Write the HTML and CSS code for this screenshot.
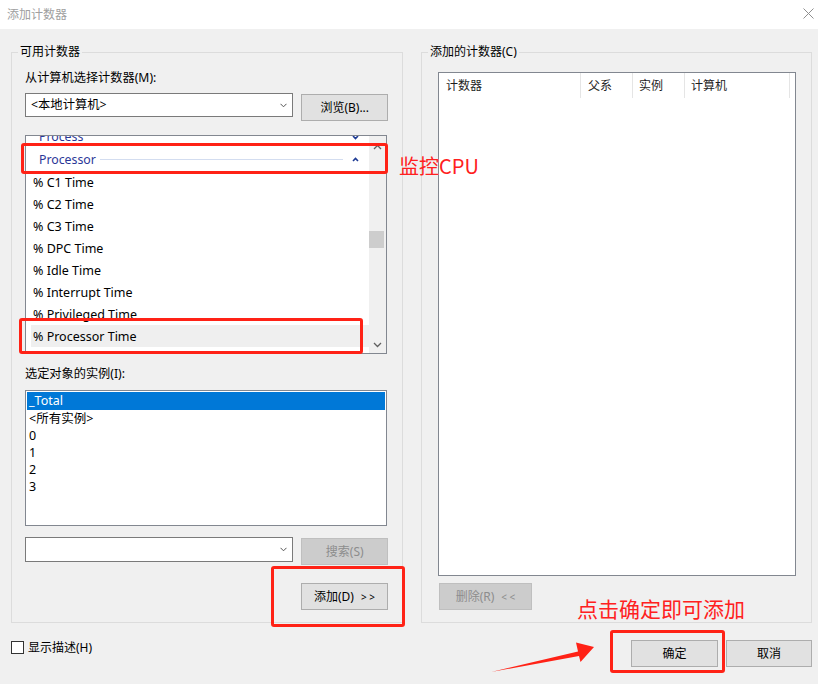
FILE: index.html
```html
<!DOCTYPE html>
<html lang="zh-CN">
<head>
<meta charset="utf-8">
<title>添加计数器</title>
<link rel="stylesheet" href="styles.css">
</head>
<body>
<div class="window">
  <div class="titlebar">
    <span class="title">添加计数器</span>
    <svg class="close" width="11" height="11" viewBox="0 0 11 11"><path d="M0.5 0.5L10.5 10.5M10.5 0.5L0.5 10.5" stroke="#8f8f8f" stroke-width="1" fill="none"/></svg>
  </div>
  <div class="client">
    <div class="groups">
      <fieldset class="group group-left">
        <legend>可用计数器</legend>
        <div class="label label-machine">从计算机选择计数器(M):</div>
        <div class="row row-machine">
          <div class="combo combo-machine">
            <span class="combo-text">&lt;本地计算机&gt;</span>
            <svg class="combo-arrow" width="7" height="5" viewBox="0 0 7 5"><path d="M0.5 0.8L3.5 3.8L6.5 0.8" stroke="#555" stroke-width="1" fill="none"/></svg>
          </div>
          <button class="btn btn-browse">浏览(B)...</button>
        </div>
        <div class="counter-list">
          <div class="rows">
            <div class="rows-inner">
              <div class="grp-row">
                <span class="grp-name">Process</span>
                <span class="grp-space"></span>
                <svg class="grp-chev" width="7" height="5" viewBox="0 0 7 5"><path d="M1 1L3.5 3.5L6 1" stroke="#1d3a94" stroke-width="1.6" fill="none"/></svg>
              </div>
              <div class="grp-row grp-open">
                <span class="grp-name">Processor</span>
                <span class="grp-line"></span>
                <svg class="grp-chev" width="7" height="5" viewBox="0 0 7 5"><path d="M1 4L3.5 1.5L6 4" stroke="#1d3a94" stroke-width="1.6" fill="none"/></svg>
              </div>
              <div class="item">% C1 Time</div>
              <div class="item">% C2 Time</div>
              <div class="item">% C3 Time</div>
              <div class="item">% DPC Time</div>
              <div class="item">% Idle Time</div>
              <div class="item">% Interrupt Time</div>
              <div class="item">% Privileged Time</div>
              <div class="item item-hot">% Processor Time</div>
            </div>
          </div>
          <div class="vscroll">
            <div class="sb-btn sb-up"><svg width="9" height="6" viewBox="0 0 9 6"><path d="M1 5L4.5 1.5L8 5" stroke="#606060" stroke-width="1.3" fill="none"/></svg></div>
            <div class="sb-track"><div class="sb-thumb"></div></div>
            <div class="sb-btn"><svg width="9" height="6" viewBox="0 0 9 6"><path d="M1 1L4.5 4.5L8 1" stroke="#606060" stroke-width="1.3" fill="none"/></svg></div>
          </div>
        </div>
        <div class="label label-inst">选定对象的实例(I):</div>
        <div class="instances">
          <div class="inst inst-sel">_Total</div>
          <div class="inst">&lt;所有实例&gt;</div>
          <div class="inst">0</div>
          <div class="inst">1</div>
          <div class="inst">2</div>
          <div class="inst">3</div>
        </div>
        <div class="row row-search">
          <div class="combo combo-search">
            <span class="combo-text"></span>
            <svg class="combo-arrow" width="7" height="5" viewBox="0 0 7 5"><path d="M0.5 0.8L3.5 3.8L6.5 0.8" stroke="#555" stroke-width="1" fill="none"/></svg>
          </div>
          <button class="btn btn-search btn-disabled">搜索(S)</button>
        </div>
        <div class="row row-add">
          <button class="btn btn-add">添加(D)<span class="arrows">&gt; &gt;</span></button>
        </div>
      </fieldset>
      <fieldset class="group group-right">
        <legend>添加的计数器(C)</legend>
        <div class="listview">
          <div class="lv-header">
            <div class="lv-col c1">计数器</div>
            <div class="lv-col c2">父系</div>
            <div class="lv-col c3">实例</div>
            <div class="lv-col c4">计算机</div>
          </div>
        </div>
        <div class="row row-remove">
          <button class="btn btn-remove btn-disabled">删除(R)<span class="arrows">&lt; &lt;</span></button>
        </div>
      </fieldset>
    </div>
    <div class="footer">
      <label class="check">
        <span class="check-box"></span>
        <span class="check-text">显示描述(H)</span>
      </label>
      <div class="footer-buttons">
        <button class="btn btn-ok">确定</button>
        <button class="btn btn-cancel">取消</button>
      </div>
    </div>
  </div>

  <div class="mark mark-processor"></div>
  <div class="mark mark-ptime"></div>
  <div class="mark mark-add"></div>
  <div class="mark mark-ok"></div>
  <div class="note note-cpu">监控CPU</div>
  <div class="note note-ok">点击确定即可添加</div>
  <svg class="pointer" width="112" height="36" viewBox="488 640 112 36">
    <path d="M491 672 L578 651.5 L576 642.5 L594 647 L580.5 662 L579 656 Z" fill="#ff2216"/>
  </svg>
</div>
</body>
</html>
```
FILE: styles.css
```css
* {
  box-sizing: border-box;
}

html, body {
  margin: 0;
  padding: 0;
}

body {
  width: 818px;
  height: 684px;
  overflow: hidden;
  font-family: "Noto Sans", "Noto Sans CJK SC", sans-serif;
  font-size: 12px;
  line-height: 16px;
  color: #000;
  background: #f0f0f0;
}

.window {
  position: relative;
  width: 818px;
  height: 684px;
}

.titlebar {
  height: 29px;
  background: #fff;
  display: flex;
  align-items: center;
  justify-content: space-between;
  padding: 0 4px 0 7px;
}

.title {
  color: #a0a0a0;
  font-size: 12px;
}

.close {
  display: block;
  margin-top: -2px;
}

.client {
  height: 655px;
  background: #f0f0f0;
  padding: 15px 6px 0 11px;
}

.groups {
  display: flex;
  gap: 18px;
  align-items: stretch;
}

.group {
  margin: 0;
  border: 1px solid #dcdcdc;
  min-width: 0;
}

.group legend {
  padding: 0 2px;
  line-height: 16px;
  font-size: 12px;
  color: #000;
}

.group-left {
  width: 393px;
  padding: 0 14px 12px 13px;
}

.group-left legend {
  margin-left: -7px;
}

.group-right {
  width: 392px;
  padding: 0 16px 12px 16px;
}

.group-right legend {
  margin-left: -10px;
}

.label {
  line-height: 16px;
  font-size: 12.2px;
}

.label-machine {
  margin-top: 10px;
}

.row {
  display: flex;
  align-items: flex-start;
}

.row-machine {
  margin-top: 7px;
  gap: 8px;
}

.combo {
  width: 270px;
  background: #fff;
  border: 1px solid #7a7a7a;
  display: flex;
  align-items: center;
  justify-content: space-between;
  padding: 0 5px 0 5px;
}

.combo-text {
  font-size: 12.3px;
}

.combo-machine {
  height: 24px;
}

.combo-search {
  height: 25px;
}

.combo-arrow {
  display: block;
}

.btn {
  font-family: "Noto Sans", "Noto Sans CJK SC", sans-serif;
  font-size: 12px;
  line-height: 16px;
  color: #000;
  background: #e1e1e1;
  border: 1px solid #adadad;
  height: 27px;
  padding: 0;
  margin: 0;
  display: flex;
  align-items: center;
  justify-content: center;
}

.btn-disabled {
  background: #cccccc;
  border-color: #bfbfbf;
  color: #8d8d8d;
}

.btn-browse,
.btn-search,
.btn-add {
  width: 87px;
  margin-top: 1px;
}

.arrows {
  font-size: 10px;
  margin-left: 7px;
  letter-spacing: 0;
}

.counter-list {
  margin-top: 14px;
  width: 362px;
  height: 219px;
  border: 1px solid #828790;
  background: #fff;
  display: flex;
}

.rows {
  flex: 1;
  overflow: hidden;
}

.rows-inner {
  margin-top: -10px;
}

.grp-row {
  display: flex;
  align-items: center;
  height: 22px;
  padding: 0 10px 0 13px;
}

.grp-open {
  height: 23px;
}

.grp-name {
  color: #2b3797;
  font-size: 12.3px;
}

.grp-space {
  flex: 1;
}

.grp-line {
  flex: 1;
  height: 1px;
  background: #d3ddf0;
  margin: 0 9px 0 4px;
}

.grp-chev {
  display: block;
}

.item {
  height: 22px;
  line-height: 23px;
  margin-left: 5px;
  padding-left: 2px;
  color: #000;
  font-size: 12.5px;
}

.item-hot {
  background: #efefef;
}

.vscroll {
  width: 17px;
  background: #f0f0f0;
  display: flex;
  flex-direction: column;
}

.sb-btn {
  height: 17px;
  display: flex;
  align-items: center;
  justify-content: center;
}

.sb-up {
  padding-top: 4px;
}

.sb-track {
  flex: 1;
}

.sb-thumb {
  margin-top: 78px;
  width: 15px;
  height: 17px;
  background: #cdcdcd;
}

.label-inst {
  margin-top: 12px;
}

.instances {
  margin-top: 8px;
  width: 362px;
  height: 136px;
  border: 1px solid #828790;
  background: #fff;
  padding: 1px 1px 0 1px;
}

.inst {
  height: 17.1px;
  line-height: 17.1px;
  padding-left: 2px;
  font-size: 12.5px;
}

.inst-sel {
  height: 18px;
  line-height: 18px;
  background: #0078d7;
  color: #fff;
}

.row-search {
  margin-top: 11px;
  gap: 8px;
}

.row-add {
  margin-top: 17px;
  justify-content: flex-end;
}

.listview {
  margin-top: 12px;
  width: 358px;
  height: 504px;
  border: 1px solid #828790;
  background: #fff;
}

.lv-header {
  display: flex;
  height: 25px;
}

.lv-col {
  height: 25px;
  line-height: 25px;
  padding-left: 7px;
  border-right: 1px solid #e5e5e5;
  color: #1e1e1e;
}

.c1 { width: 142px; }
.c2 { width: 52px; }
.c3 { width: 52px; padding-left: 6px; }
.c4 { width: 105px; padding-left: 6px; }

.row-remove {
  margin-top: 7px;
}

.btn-remove {
  width: 93px;
  margin-left: 1px;
}

.footer {
  margin-top: 17px;
  display: flex;
  justify-content: space-between;
  align-items: flex-start;
}

.check {
  display: flex;
  align-items: center;
  gap: 4px;
  height: 14px;
}

.check-box {
  width: 13px;
  height: 13px;
  border: 1px solid #333;
  background: #fff;
}

.check-text {
  line-height: 14px;
  margin-top: 1px;
}

.footer-buttons {
  display: flex;
  gap: 8px;
}

.btn-ok {
  width: 87px;
}

.btn-cancel {
  width: 86px;
}

/* annotations drawn over the screenshot */
.mark {
  position: absolute;
  border: 3px solid #ff2216;
  border-radius: 3px;
}

.mark-processor {
  left: 21px;
  top: 143px;
  width: 367px;
  height: 31px;
}

.mark-ptime {
  left: 19px;
  top: 318px;
  width: 344px;
  height: 36px;
}

.mark-add {
  left: 271px;
  top: 566px;
  width: 134px;
  height: 61px;
}

.mark-ok {
  left: 610px;
  top: 630px;
  width: 115px;
  height: 43px;
}

.note {
  position: absolute;
  color: #ff2020;
  font-family: "Noto Sans CJK SC", sans-serif;
  line-height: 24px;
  white-space: nowrap;
}

.note-cpu {
  left: 399px;
  top: 154px;
  font-size: 20px;
}

.note-ok {
  left: 577px;
  top: 596px;
  font-size: 21px;
}

.pointer {
  position: absolute;
  left: 488px;
  top: 640px;
}
```
